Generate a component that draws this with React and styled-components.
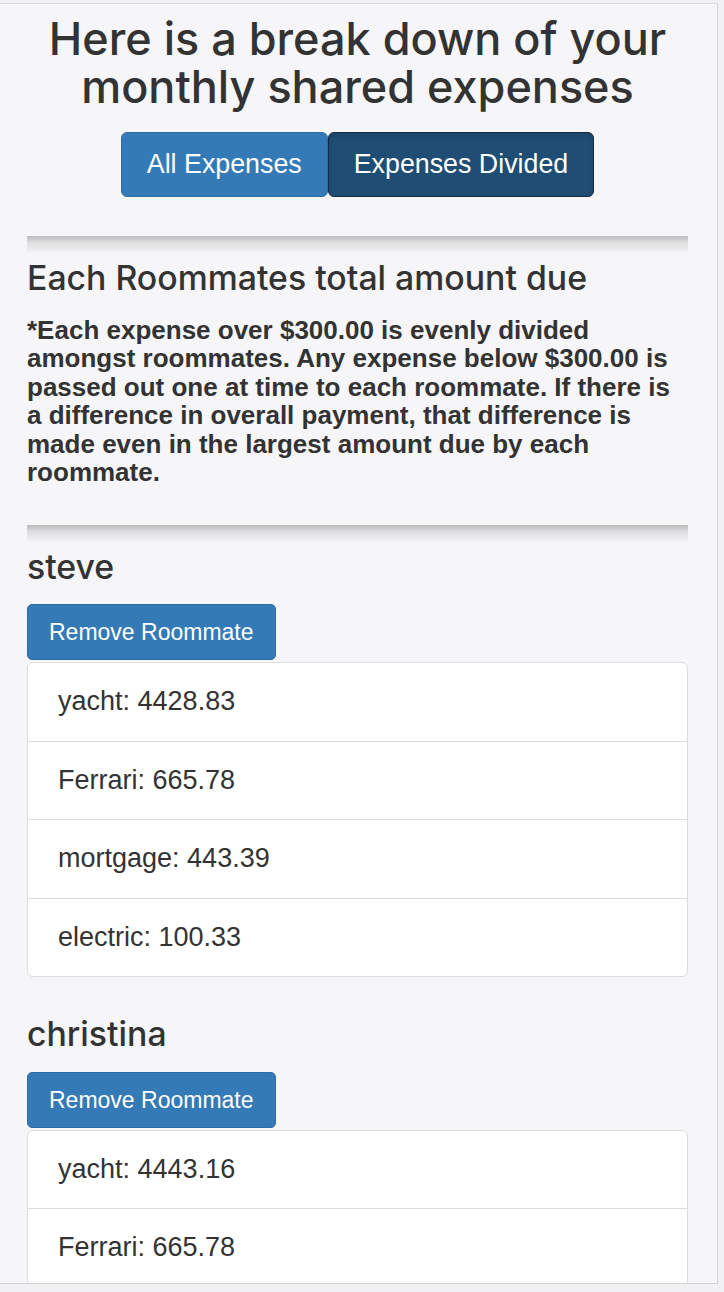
import React from 'react'
import styled, { createGlobalStyle } from 'styled-components'

const GlobalStyle = createGlobalStyle`
  html, body {
    margin: 0;
    padding: 0;
    background: #f1f1f3;
  }
  body {
    font-family: 'Liberation Sans', Arial, sans-serif;
    color: #333;
  }
`

const Frame = styled.div`
  margin-top: 3px;
  width: 718px;
  height: 1281px;
  box-sizing: border-box;
  border-top: 1px solid #dadadc;
  border-right: 1px solid #d4d4d6;
  border-bottom: 1px solid #d4d4d6;
  background: #f6f6f8;
  overflow: hidden;
`

const Content = styled.div`
  padding: 0 29px 0 27px;
`

const Title = styled.h1`
  margin: 11px 0 0;
  font-family: 'Inter', 'Liberation Sans', sans-serif;
  font-weight: 500;
  font-size: 45px;
  line-height: 48px;
  text-align: center;
  color: #333;
`

const Toggle = styled.div`
  display: flex;
  justify-content: center;
  margin-top: 21px;
`

const ToggleButton = styled.button`
  font-family: 'Liberation Sans', Arial, sans-serif;
  font-size: 26.8px;
  line-height: 33px;
  padding: 15px 25px;
  color: #fff;
  border-radius: 6px;
  border: 1px solid ${(p) => (p.active ? '#122b40' : '#2e6da4')};
  background: ${(p) => (p.active ? '#204d74' : '#337ab7')};
  box-shadow: ${(p) => (p.active ? 'inset 0 3px 5px rgba(0, 0, 0, 0.125)' : 'none')};
  cursor: pointer;
`

const Divider = styled.div`
  height: 18px;
  background: linear-gradient(to bottom, rgba(0, 0, 0, 0.24), rgba(0, 0, 0, 0.1) 35%, rgba(0, 0, 0, 0));
  margin-top: ${(p) => p.top}px;
`

const Heading = styled.h2`
  margin: ${(p) => p.top}px 0 0;
  font-family: 'Inter', 'Liberation Sans', sans-serif;
  font-weight: 500;
  font-size: 33.8px;
  line-height: 40px;
  color: #333;
`

const Note = styled.p`
  margin: 18px 0 0;
  font-weight: bold;
  font-size: 26px;
  line-height: 28.5px;
`

const RemoveButton = styled.button`
  display: block;
  margin-top: 17.6px;
  font-family: 'Liberation Sans', Arial, sans-serif;
  font-size: 23px;
  line-height: 30px;
  padding: 12px 21px;
  color: #fff;
  background: #337ab7;
  border: 1px solid #2e6da4;
  border-radius: 5px;
  cursor: pointer;
`

const List = styled.ul`
  list-style: none;
  margin: 2px 0 0;
  padding: 0;
  background: #fff;
  border: 1px solid #dddddd;
  border-radius: 6px;
`

const Item = styled.li`
  padding: 20px 30px;
  font-size: 27px;
  line-height: 37.5px;
  color: #333;
  & + & {
    border-top: 1px solid #dddddd;
  }
`

const roommates = [
  {
    name: 'steve',
    expenses: [
      ['yacht', '4428.83'],
      ['Ferrari', '665.78'],
      ['mortgage', '443.39'],
      ['electric', '100.33'],
    ],
  },
  {
    name: 'christina',
    expenses: [
      ['yacht', '4443.16'],
      ['Ferrari', '665.78'],
    ],
  },
]

function Roommate({ roommate, first }) {
  return (
    <section>
      <Heading top={first ? 4 : 36.7}>{roommate.name}</Heading>
      <RemoveButton>Remove Roommate</RemoveButton>
      <List>
        {roommate.expenses.map(([label, amount]) => (
          <Item key={label}>
            {label}: {amount}
          </Item>
        ))}
      </List>
    </section>
  )
}

export default function App() {
  return (
    <>
      <GlobalStyle />
      <Frame>
        <Content>
          <Title>Here is a break down of your monthly shared expenses</Title>
          <Toggle>
            <ToggleButton>All Expenses</ToggleButton>
            <ToggleButton active>Expenses Divided</ToggleButton>
          </Toggle>
          <Divider top={39} />
          <Heading top={3.7}>Each Roommates total amount due</Heading>
          <Note>
            *Each expense over $300.00 is evenly divided amongst roommates. Any expense below $300.00 is
            passed out one at time to each roommate. If there is a difference in overall payment, that
            difference is made even in the largest amount due by each roommate.
          </Note>
          <Divider top={38} />
          {roommates.map((r, i) => (
            <Roommate key={r.name} roommate={r} first={i === 0} />
          ))}
        </Content>
      </Frame>
    </>
  )
}
